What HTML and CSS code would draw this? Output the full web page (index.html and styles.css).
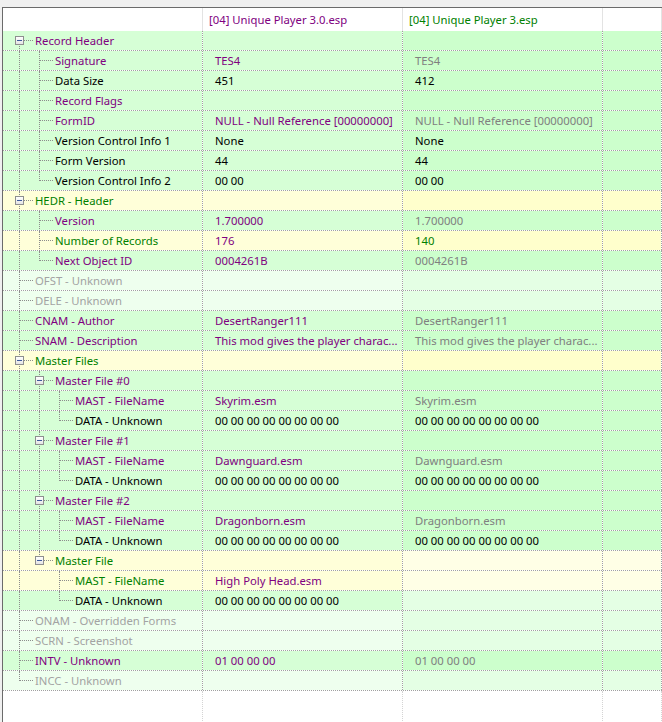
FILE: index.html
```html
<!DOCTYPE html>
<html lang="en">
<head>
    <meta charset="UTF-8">
    <title>Record View</title>
    <link rel="stylesheet" href="styles.css">
</head>
<body>
<div class="frame">
    <!-- column headers -->
    <div class="head">
        <div class="hcell"></div>
        <div class="hcell purple">[04] Unique Player 3.0.esp</div>
        <div class="hcell green-t">[04] Unique Player 3.esp</div>
        <div class="hcell"></div>
    </div>

    <!-- Record Header -->
    <div class="row green">
        <div class="cell name"><span class="g f"><i class="box"></i></span><span class="lbl purple">Record Header</span></div>
        <div class="cell"></div><div class="cell"></div><div class="cell"></div>
    </div>
    <div class="row green">
        <div class="cell name"><span class="g v"></span><span class="g t"></span><span class="lbl purple">Signature</span></div>
        <div class="cell val purple">TES4</div><div class="cell val gray">TES4</div><div class="cell"></div>
    </div>
    <div class="row green">
        <div class="cell name"><span class="g v"></span><span class="g t"></span><span class="lbl">Data Size</span></div>
        <div class="cell val">451</div><div class="cell val">412</div><div class="cell"></div>
    </div>
    <div class="row green">
        <div class="cell name"><span class="g v"></span><span class="g t"></span><span class="lbl purple">Record Flags</span></div>
        <div class="cell"></div><div class="cell"></div><div class="cell"></div>
    </div>
    <div class="row green">
        <div class="cell name"><span class="g v"></span><span class="g t"></span><span class="lbl purple">FormID</span></div>
        <div class="cell val purple">NULL - Null Reference [00000000]</div><div class="cell val gray">NULL - Null Reference [00000000]</div><div class="cell"></div>
    </div>
    <div class="row green">
        <div class="cell name"><span class="g v"></span><span class="g t"></span><span class="lbl">Version Control Info 1</span></div>
        <div class="cell val">None</div><div class="cell val">None</div><div class="cell"></div>
    </div>
    <div class="row green">
        <div class="cell name"><span class="g v"></span><span class="g t"></span><span class="lbl">Form Version</span></div>
        <div class="cell val">44</div><div class="cell val">44</div><div class="cell"></div>
    </div>
    <div class="row green">
        <div class="cell name"><span class="g v"></span><span class="g l"></span><span class="lbl">Version Control Info 2</span></div>
        <div class="cell val">00 00</div><div class="cell val">00 00</div><div class="cell"></div>
    </div>

    <!-- HEDR -->
    <div class="row yellow">
        <div class="cell name"><span class="g t"><i class="box"></i></span><span class="lbl green-t">HEDR - Header</span></div>
        <div class="cell"></div><div class="cell"></div><div class="cell"></div>
    </div>
    <div class="row green">
        <div class="cell name"><span class="g v"></span><span class="g t"></span><span class="lbl purple">Version</span></div>
        <div class="cell val purple">1.700000</div><div class="cell val gray">1.700000</div><div class="cell"></div>
    </div>
    <div class="row yellow">
        <div class="cell name"><span class="g v"></span><span class="g t"></span><span class="lbl green-t">Number of Records</span></div>
        <div class="cell val purple">176</div><div class="cell val green-t">140</div><div class="cell"></div>
    </div>
    <div class="row green">
        <div class="cell name"><span class="g v"></span><span class="g l"></span><span class="lbl purple">Next Object ID</span></div>
        <div class="cell val purple">0004261B</div><div class="cell val gray">0004261B</div><div class="cell"></div>
    </div>

    <div class="row faint">
        <div class="cell name"><span class="g t"></span><span class="lbl muted">OFST - Unknown</span></div>
        <div class="cell"></div><div class="cell"></div><div class="cell"></div>
    </div>
    <div class="row faint">
        <div class="cell name"><span class="g t"></span><span class="lbl muted">DELE - Unknown</span></div>
        <div class="cell"></div><div class="cell"></div><div class="cell"></div>
    </div>
    <div class="row green">
        <div class="cell name"><span class="g t"></span><span class="lbl purple">CNAM - Author</span></div>
        <div class="cell val purple">DesertRanger111</div><div class="cell val gray">DesertRanger111</div><div class="cell"></div>
    </div>
    <div class="row green">
        <div class="cell name"><span class="g t"></span><span class="lbl purple">SNAM - Description</span></div>
        <div class="cell val purple">This mod gives the player charac...</div><div class="cell val gray">This mod gives the player charac...</div><div class="cell"></div>
    </div>

    <!-- Master Files -->
    <div class="row yellow">
        <div class="cell name"><span class="g t"><i class="box"></i></span><span class="lbl green-t">Master Files</span></div>
        <div class="cell"></div><div class="cell"></div><div class="cell"></div>
    </div>
    <div class="row green">
        <div class="cell name"><span class="g v"></span><span class="g t"><i class="box"></i></span><span class="lbl purple">Master File #0</span></div>
        <div class="cell"></div><div class="cell"></div><div class="cell"></div>
    </div>
    <div class="row green">
        <div class="cell name"><span class="g v"></span><span class="g v"></span><span class="g t"></span><span class="lbl purple">MAST - FileName</span></div>
        <div class="cell val purple">Skyrim.esm</div><div class="cell val gray">Skyrim.esm</div><div class="cell"></div>
    </div>
    <div class="row green">
        <div class="cell name"><span class="g v"></span><span class="g v"></span><span class="g l"></span><span class="lbl">DATA - Unknown</span></div>
        <div class="cell val">00 00 00 00 00 00 00 00</div><div class="cell val">00 00 00 00 00 00 00 00</div><div class="cell"></div>
    </div>
    <div class="row green">
        <div class="cell name"><span class="g v"></span><span class="g t"><i class="box"></i></span><span class="lbl purple">Master File #1</span></div>
        <div class="cell"></div><div class="cell"></div><div class="cell"></div>
    </div>
    <div class="row green">
        <div class="cell name"><span class="g v"></span><span class="g v"></span><span class="g t"></span><span class="lbl purple">MAST - FileName</span></div>
        <div class="cell val purple">Dawnguard.esm</div><div class="cell val gray">Dawnguard.esm</div><div class="cell"></div>
    </div>
    <div class="row green">
        <div class="cell name"><span class="g v"></span><span class="g v"></span><span class="g l"></span><span class="lbl">DATA - Unknown</span></div>
        <div class="cell val">00 00 00 00 00 00 00 00</div><div class="cell val">00 00 00 00 00 00 00 00</div><div class="cell"></div>
    </div>
    <div class="row green">
        <div class="cell name"><span class="g v"></span><span class="g t"><i class="box"></i></span><span class="lbl purple">Master File #2</span></div>
        <div class="cell"></div><div class="cell"></div><div class="cell"></div>
    </div>
    <div class="row green">
        <div class="cell name"><span class="g v"></span><span class="g v"></span><span class="g t"></span><span class="lbl purple">MAST - FileName</span></div>
        <div class="cell val purple">Dragonborn.esm</div><div class="cell val gray">Dragonborn.esm</div><div class="cell"></div>
    </div>
    <div class="row green">
        <div class="cell name"><span class="g v"></span><span class="g v"></span><span class="g l"></span><span class="lbl">DATA - Unknown</span></div>
        <div class="cell val">00 00 00 00 00 00 00 00</div><div class="cell val">00 00 00 00 00 00 00 00</div><div class="cell"></div>
    </div>
    <div class="row yellow lite">
        <div class="cell name"><span class="g v"></span><span class="g l"><i class="box"></i></span><span class="lbl green-t">Master File</span></div>
        <div class="cell"></div><div class="cell"></div><div class="cell"></div>
    </div>
    <div class="row yellow lite">
        <div class="cell name"><span class="g v"></span><span class="g"></span><span class="g t"></span><span class="lbl green-t">MAST - FileName</span></div>
        <div class="cell val purple">High Poly Head.esm</div><div class="cell"></div><div class="cell"></div>
    </div>
    <div class="row green lite">
        <div class="cell name"><span class="g v"></span><span class="g"></span><span class="g l"></span><span class="lbl">DATA - Unknown</span></div>
        <div class="cell val">00 00 00 00 00 00 00 00</div><div class="cell"></div><div class="cell"></div>
    </div>

    <div class="row faint">
        <div class="cell name"><span class="g t"></span><span class="lbl muted">ONAM - Overridden Forms</span></div>
        <div class="cell"></div><div class="cell"></div><div class="cell"></div>
    </div>
    <div class="row faint">
        <div class="cell name"><span class="g t"></span><span class="lbl muted">SCRN - Screenshot</span></div>
        <div class="cell"></div><div class="cell"></div><div class="cell"></div>
    </div>
    <div class="row green">
        <div class="cell name"><span class="g t"></span><span class="lbl purple">INTV - Unknown</span></div>
        <div class="cell val purple">01 00 00 00</div><div class="cell val gray">01 00 00 00</div><div class="cell"></div>
    </div>
    <div class="row faint">
        <div class="cell name"><span class="g l"></span><span class="lbl muted">INCC - Unknown</span></div>
        <div class="cell"></div><div class="cell"></div><div class="cell"></div>
    </div>

    <!-- empty space below the tree -->
    <div class="fill">
        <div class="cell"></div><div class="cell"></div><div class="cell"></div><div class="cell"></div>
    </div>
</div>
</body>
</html>
```

FILE: styles.css
```css
html, body {
    height: 100%;
}

body {
    margin: 0;
    background: #f0f0f0;
    font-family: 'Noto Sans', 'Open Sans', sans-serif;
    font-size: 11.3px;
    color: #000;
    overflow: hidden;
}

.frame {
    display: flex;
    flex-direction: column;
    height: calc(100% - 7px);
    margin: 7px 0 0 2px;
    border-top: 1px solid #6b6b6b;
    border-left: 1px solid #6b6b6b;
    background: #fff;
}

.head,
.row,
.fill {
    display: grid;
    grid-template-columns: 200px 200px 200px 1fr;
}

.head {
    height: 23px;
}

.hcell {
    border-right: 1px solid #e3e3e3;
    padding-left: 6px;
    line-height: 23px;
    white-space: nowrap;
}

.row {
    height: 19px;
    border-bottom: 1px dotted #a0a0a0;
    background: #fff;
}

.cell {
    border-right: 1px dotted #a0a0a0;
    background-clip: padding-box;
    line-height: 19px;
    white-space: nowrap;
    overflow: hidden;
}

.cell.val {
    padding-left: 12px;
}

.cell.name {
    display: flex;
    padding-left: 6px;
    overflow: visible;
}

/* row colours: first two columns, then the rest */
.row.green .cell { background-color: #d6ffd6; }
.row.green .cell:nth-child(n+3) { background-color: #ccffcc; }
.row.yellow .cell { background-color: #ffffd9; }
.row.yellow .cell:nth-child(n+3) { background-color: #ffffcc; }
.row.faint .cell { background-color: #eeffee; }
.row.faint .cell:nth-child(n+3) { background-color: #e4ffe4; }
.row.yellow.lite .cell:nth-child(n+3) { background-color: #ffffe6; }
.row.green.lite .cell:nth-child(n+3) { background-color: #e4ffe4; }

.fill {
    flex: 1;
}

.fill .cell {
    border-right-color: #d4d4d4;
}

/* text colours */
.purple { color: #800080; }
.green-t { color: #008000; }
.gray { color: #808080; }
.muted { color: #a3a3a3; }

.lbl {
    padding-left: 6px;
}

/* tree guides */
.g {
    position: relative;
    flex: none;
    width: 20px;
}

.g.v::before,
.g.t::before,
.g.l::before,
.g.f::before {
    content: '';
    position: absolute;
    left: 10px;
    top: 0;
    bottom: -1px;
    border-left: 1px dotted #8c8c8c;
}

.g.l::before {
    bottom: auto;
    height: 10px;
}

.g.f::before {
    top: 9px;
}

.g.t::after,
.g.l::after,
.g.f::after {
    content: '';
    position: absolute;
    left: 11px;
    top: 9px;
    width: 13px;
    border-top: 1px dotted #8c8c8c;
}

.box {
    position: absolute;
    left: 6px;
    top: 5px;
    z-index: 1;
    width: 7px;
    height: 7px;
    border: 1px solid #8e8f8f;
    background: linear-gradient(#ffffff, #e4e4e4);
}

.box::after {
    content: '';
    position: absolute;
    left: 1px;
    top: 3px;
    width: 5px;
    height: 1px;
    background: #3c5a9a;
}
```
